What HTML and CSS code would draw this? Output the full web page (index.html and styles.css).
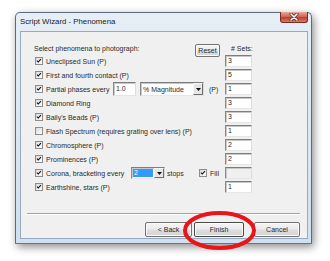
FILE: index.html
```html
<!DOCTYPE html>
<html>
<head>
<meta charset="utf-8">
<link rel="stylesheet" href="styles.css">
</head>
<body>
<div class="window">
  <div class="titlebar">
    <span class="title">Script Wizard - Phenomena</span>
    <span class="close"><svg width="10" height="8" viewBox="0 0 10 8"><path d="M2 1 L8 7 M8 1 L2 7" stroke="#5a2018" stroke-width="3" stroke-linecap="round"/><path d="M2 1 L8 7 M8 1 L2 7" stroke="#fff" stroke-width="1.6" stroke-linecap="round"/></svg></span>
  </div>
  <div class="client">
    <div class="form">
      <div class="hdr-main"><span class="hdr-text">Select phenomena to photograph:</span><button class="btn reset">Reset</button></div>
      <div class="hdr-sets"># Sets:</div>

      <div class="opt"><span class="cb"><svg viewBox="0 0 8 8"><path d="M1.3 3.6 L3 5.4 L6.6 1.6" fill="none" stroke="#111" stroke-width="1.5"/></svg></span><span>Uneclipsed Sun (P)</span></div>
      <span class="sets">3</span>

      <div class="opt"><span class="cb"><svg viewBox="0 0 8 8"><path d="M1.3 3.6 L3 5.4 L6.6 1.6" fill="none" stroke="#111" stroke-width="1.5"/></svg></span><span>First and fourth contact (P)</span></div>
      <span class="sets">5</span>

      <div class="opt"><span class="cb"><svg viewBox="0 0 8 8"><path d="M1.3 3.6 L3 5.4 L6.6 1.6" fill="none" stroke="#111" stroke-width="1.5"/></svg></span><span class="lbl-partial">Partial phases every</span><span class="edit">1.0</span><span class="combo combo-mag"><span class="val">% Magnitude</span><span class="dd"><svg width="5" height="3" viewBox="0 0 5 3"><path d="M0 0 H5 L2.5 3 Z" fill="#111"/></svg></span></span><span class="p-suffix">(P)</span></div>
      <span class="sets">1</span>

      <div class="opt"><span class="cb"><svg viewBox="0 0 8 8"><path d="M1.3 3.6 L3 5.4 L6.6 1.6" fill="none" stroke="#111" stroke-width="1.5"/></svg></span><span>Diamond Ring</span></div>
      <span class="sets">3</span>

      <div class="opt"><span class="cb"><svg viewBox="0 0 8 8"><path d="M1.3 3.6 L3 5.4 L6.6 1.6" fill="none" stroke="#111" stroke-width="1.5"/></svg></span><span>Baily's Beads (P)</span></div>
      <span class="sets">3</span>

      <div class="opt"><span class="cb"></span><span>Flash Spectrum (requires grating over lens) (P)</span></div>
      <span class="sets">1</span>

      <div class="opt"><span class="cb"><svg viewBox="0 0 8 8"><path d="M1.3 3.6 L3 5.4 L6.6 1.6" fill="none" stroke="#111" stroke-width="1.5"/></svg></span><span>Chromosphere (P)</span></div>
      <span class="sets">2</span>

      <div class="opt"><span class="cb"><svg viewBox="0 0 8 8"><path d="M1.3 3.6 L3 5.4 L6.6 1.6" fill="none" stroke="#111" stroke-width="1.5"/></svg></span><span>Prominences (P)</span></div>
      <span class="sets">2</span>

      <div class="opt"><span class="cb"><svg viewBox="0 0 8 8"><path d="M1.3 3.6 L3 5.4 L6.6 1.6" fill="none" stroke="#111" stroke-width="1.5"/></svg></span><span class="lbl-corona">Corona, bracketing every</span><span class="combo combo-stops"><span class="val"><span class="sel">2</span></span><span class="dd"><svg width="5" height="3" viewBox="0 0 5 3"><path d="M0 0 H5 L2.5 3 Z" fill="#111"/></svg></span></span><span class="lbl-stops">stops</span><span class="cb"><svg viewBox="0 0 8 8"><path d="M1.3 3.6 L3 5.4 L6.6 1.6" fill="none" stroke="#111" stroke-width="1.5"/></svg></span><span>Fill</span></div>
      <span class="sets disabled"></span>

      <div class="opt"><span class="cb"><svg viewBox="0 0 8 8"><path d="M1.3 3.6 L3 5.4 L6.6 1.6" fill="none" stroke="#111" stroke-width="1.5"/></svg></span><span>Earthshine, stars (P)</span></div>
      <span class="sets">1</span>
    </div>
    <div class="sep"></div>
    <div class="buttons">
      <button class="btn back">&lt; Back</button>
      <button class="btn finish">Finish</button>
      <button class="btn cancel">Cancel</button>
    </div>
  </div>
</div>
<svg class="ring" width="76" height="41" viewBox="0 0 76 41"><ellipse cx="37.5" cy="20.5" rx="34.5" ry="17.5" fill="none" stroke="#e8161b" stroke-width="4"/></svg>
</body>
</html>
```

FILE: styles.css
```css
* { box-sizing: border-box; }

body {
  margin: 0;
  width: 330px;
  height: 261px;
  background: #fff;
  position: relative;
  overflow: hidden;
  font-family: "Liberation Sans", Arial, sans-serif;
  color: #2a2a2a;
}

.window {
  margin: 12px 0 0 15px;
  width: 297px;
  height: 232px;
  border: 1px solid #5a6b7f;
  border-bottom-color: #3f8797;
  border-radius: 5px 5px 1px 1px;
  background: linear-gradient(#e6eef6, #dbe6f1 55%, #cfe0ee);
  padding: 0 3px 4px 4px;
  display: flex;
  flex-direction: column;
  box-shadow: 2px 3px 9px rgba(0, 0, 0, 0.45);
}

.titlebar {
  height: 18px;
  display: flex;
  align-items: flex-start;
  flex: none;
}

.title {
  font-size: 7.8px;
  line-height: 15px;
  padding-top: 1px;
  color: #1a1a1a;
}

.close {
  margin-left: auto;
  margin-top: -1px;
  width: 28px;
  height: 11px;
  border: 1px solid #7a2c22;
  border-top: none;
  border-radius: 0 0 3px 3px;
  background: linear-gradient(#e8a898, #d3675a 45%, #c04030 55%, #d77b68);
  display: flex;
  align-items: center;
  justify-content: center;
}

.close svg { display: block; }

.client {
  flex: 1;
  background: #f0f0f0;
  border: 1px solid #98aabd;
  display: flex;
  flex-direction: column;
}

.form {
  padding: 11px 55px 0 14px;
  display: grid;
  grid-template-columns: 190px 27px;
  grid-template-rows: 11px;
  grid-auto-rows: 14px;
  font-size: 7px;
}

.hdr-main {
  display: flex;
  align-items: flex-start;
  line-height: 11px;
  margin-left: -1px;
}

.hdr-text { white-space: nowrap; }

.btn {
  font-family: "Liberation Sans", Arial, sans-serif;
  font-size: 7px;
  color: #2a2a2a;
  padding: 0;
  border: 1px solid #737373;
  border-radius: 2px;
  background: linear-gradient(#f4f4f4, #ececec 48%, #dedede 52%, #d4d4d4);
  box-shadow: inset 0 0 0 1px #fbfbfb;
  flex: none;
}

.reset {
  margin-left: auto;
  margin-right: 5px;
  margin-top: 1px;
  width: 25px;
  height: 13px;
  line-height: 11px;
}

.hdr-sets {
  padding-left: 6px;
  line-height: 11px;
  white-space: nowrap;
}

.opt {
  display: flex;
  align-items: center;
  white-space: nowrap;
}

.cb {
  width: 8px;
  height: 8px;
  border: 1px solid #8b8d8f;
  background: linear-gradient(135deg, #d9dadb, #fdfdfd);
  margin-right: 3px;
  flex: none;
  display: flex;
}

.cb svg { width: 6px; height: 6px; }

.sets {
  align-self: center;
  height: 12px;
  border: 1px solid;
  border-color: #7d7d7d #dcdcdc #e6e6e6 #8a8a8a;
  box-shadow: inset 1px 1px 0 #c8c8c8;
  background: #fff;
  line-height: 10px;
  padding-left: 2px;
}

.sets.disabled { background: #f0f0f0; }

.lbl-partial { width: 67px; flex: none; }
.lbl-corona { width: 85px; flex: none; }
.lbl-stops { width: 34px; flex: none; padding-left: 2px; }

.edit {
  width: 23px;
  height: 14px;
  border: 1px solid;
  border-color: #7d7d7d #dcdcdc #e6e6e6 #8a8a8a;
  box-shadow: inset 1px 1px 0 #c8c8c8;
  background: #fff;
  line-height: 12px;
  padding-left: 2px;
  flex: none;
}

.combo {
  display: flex;
  border: 1px solid;
  border-color: #7d7d7d #dcdcdc #e6e6e6 #8a8a8a;
  box-shadow: inset 1px 1px 0 #c8c8c8;
  background: #fff;
  flex: none;
}

.combo-mag { width: 64px; height: 14px; margin-left: 4px; }
.combo-stops { width: 34px; height: 12px; }

.val {
  flex: 1;
  padding-left: 2px;
  display: flex;
  align-items: center;
}

.combo-stops .val { padding: 1px; }

.sel {
  background: #3399ff;
  color: #fff;
  height: 100%;
  width: 100%;
  line-height: 8px;
  padding-left: 1px;
}

.dd {
  width: 10px;
  flex: none;
  border: 1px solid;
  border-color: #f8f8f8 #6f6f6f #6f6f6f #f8f8f8;
  background: #e6e6e6;
  display: flex;
  align-items: center;
  justify-content: center;
}

.dd svg { display: block; }

.p-suffix { margin-left: 5px; }

.sep {
  margin: 19px 7px 0 6px;
  height: 2px;
  border-top: 1px solid #a3a3a3;
  border-bottom: 1px solid #ffffff;
  flex: none;
}

.buttons {
  display: flex;
  justify-content: flex-end;
  margin-top: 7px;
  padding-right: 7px;
}

.buttons .btn { height: 15px; }
.back { width: 47px; margin-right: 2px; }
.finish { width: 50px; margin-right: 10px; border-color: #4a4a4a; }
.cancel { width: 46px; }

.ring {
  position: absolute;
  left: 182px;
  top: 210px;
}
```
